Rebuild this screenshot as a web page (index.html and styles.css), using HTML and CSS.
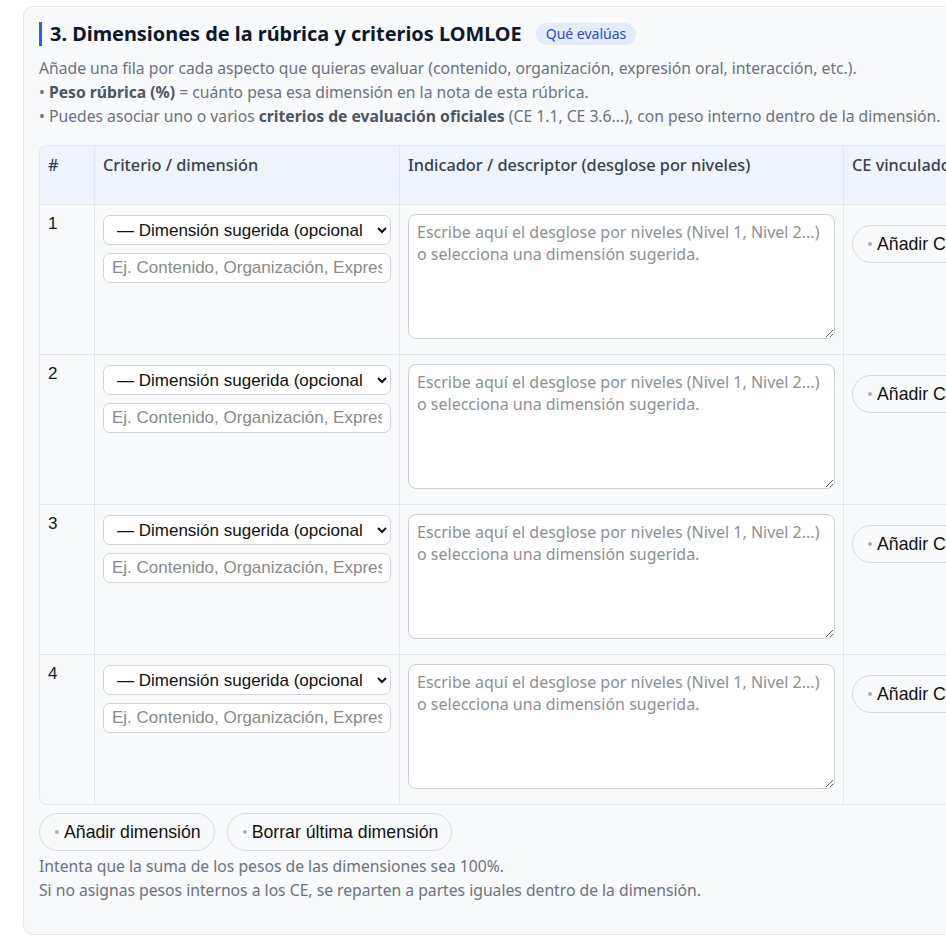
FILE: index.html
```html
<!DOCTYPE html>
<html lang="es">
<head>
<meta charset="utf-8">
<title>Dimensiones de la rúbrica</title>
<link rel="stylesheet" href="styles.css">
</head>
<body>
<section class="card">
  <div class="head">
    <h2 class="title">3. Dimensiones de la rúbrica y criterios LOMLOE</h2>
    <span class="pill">Qué evalúas</span>
  </div>
  <div class="desc">
    <p>Añade una fila por cada aspecto que quieras evaluar (contenido, organización, expresión oral, interacción, etc.).</p>
    <p>• <b>Peso rúbrica (%)</b> = cuánto pesa esa dimensión en la nota de esta rúbrica.</p>
    <p>• Puedes asociar uno o varios <b>criterios de evaluación oficiales</b> (CE 1.1, CE 3.6...), con peso interno dentro de la dimensión.</p>
  </div>
  <div class="table-wrap">
    <table class="grid">
      <thead>
        <tr>
          <th class="c-num">#</th>
          <th class="c-crit">Criterio / dimensión</th>
          <th class="c-ind">Indicador / descriptor (desglose por niveles)</th>
          <th class="c-ce">CE vinculados</th>
          <th class="c-peso">Peso rúbrica (%)</th>
        </tr>
      </thead>
      <tbody>
        <tr>
          <td class="c-num">1</td>
          <td class="c-crit">
            <select class="sel"><option>— Dimensión sugerida (opcional) —</option></select>
            <input class="inp" type="text" placeholder="Ej. Contenido, Organización, Expresión oral...">
          </td>
          <td class="c-ind"><textarea class="ta" placeholder="Escribe aquí el desglose por niveles (Nivel 1, Nivel 2...) o selecciona una dimensión sugerida."></textarea></td>
          <td class="c-ce"><button class="btn ce-btn" type="button">Añadir CE</button></td>
          <td class="c-peso"></td>
        </tr>
        <tr>
          <td class="c-num">2</td>
          <td class="c-crit">
            <select class="sel"><option>— Dimensión sugerida (opcional) —</option></select>
            <input class="inp" type="text" placeholder="Ej. Contenido, Organización, Expresión oral...">
          </td>
          <td class="c-ind"><textarea class="ta" placeholder="Escribe aquí el desglose por niveles (Nivel 1, Nivel 2...) o selecciona una dimensión sugerida."></textarea></td>
          <td class="c-ce"><button class="btn ce-btn" type="button">Añadir CE</button></td>
          <td class="c-peso"></td>
        </tr>
        <tr>
          <td class="c-num">3</td>
          <td class="c-crit">
            <select class="sel"><option>— Dimensión sugerida (opcional) —</option></select>
            <input class="inp" type="text" placeholder="Ej. Contenido, Organización, Expresión oral...">
          </td>
          <td class="c-ind"><textarea class="ta" placeholder="Escribe aquí el desglose por niveles (Nivel 1, Nivel 2...) o selecciona una dimensión sugerida."></textarea></td>
          <td class="c-ce"><button class="btn ce-btn" type="button">Añadir CE</button></td>
          <td class="c-peso"></td>
        </tr>
        <tr>
          <td class="c-num">4</td>
          <td class="c-crit">
            <select class="sel"><option>— Dimensión sugerida (opcional) —</option></select>
            <input class="inp" type="text" placeholder="Ej. Contenido, Organización, Expresión oral...">
          </td>
          <td class="c-ind"><textarea class="ta" placeholder="Escribe aquí el desglose por niveles (Nivel 1, Nivel 2...) o selecciona una dimensión sugerida."></textarea></td>
          <td class="c-ce"><button class="btn ce-btn" type="button">Añadir CE</button></td>
          <td class="c-peso"></td>
        </tr>
      </tbody>
    </table>
  </div>
  <div class="actions">
    <button class="btn" type="button">Añadir dimensión</button>
    <button class="btn" type="button">Borrar última dimensión</button>
  </div>
  <div class="help">
    <p>Intenta que la suma de los pesos de las dimensiones sea 100%.</p>
    <p>Si no asignas pesos internos a los CE, se reparten a partes iguales dentro de la dimensión.</p>
  </div>
</section>
</body>
</html>
```
FILE: styles.css
```css
html, body {
  margin: 0;
  padding: 0;
  background: #ffffff;
  overflow: hidden;
}
body {
  padding: 6px 0 0 23px;
  font-family: "Noto Sans", "Open Sans", sans-serif;
  color: #1f2937;
}
.card {
  width: 1220px;
  box-sizing: border-box;
  background: #f8f9fb;
  border: 1px solid #e3e6ea;
  border-radius: 10px;
  padding: 12px 15px 32px 15px;
}
.head {
  display: flex;
  align-items: center;
  gap: 14px;
  height: 30px;
}
.title {
  margin: 0;
  font-size: 19.9px;
  font-weight: 700;
  color: #0f172a;
  border-left: 3px solid #2563eb;
  padding-left: 8px;
  line-height: 24px;
}
.pill {
  background: #e3ecfb;
  color: #1d4ed8;
  font-size: 14px;
  border-radius: 999px;
  padding: 1px 10px;
  line-height: 20px;
}
.desc {
  margin-top: 7px;
  font-size: 15.7px;
  line-height: 24px;
  color: #6b7280;
}
.desc p, .help p { margin: 0; }
.desc b { color: #4b5563; font-weight: 700; }
.table-wrap {
  margin-top: 17px;
  border: 1px solid #e3e6ea;
  border-right: none;
  border-radius: 8px 0 0 8px;
  overflow: hidden;
}
.grid {
  border-collapse: collapse;
  table-layout: fixed;
  width: 1182px;
}
.grid th, .grid td {
  border-left: 1px solid #e3e6ea;
  border-bottom: 1px solid #e3e6ea;
  text-align: left;
  vertical-align: top;
}
.grid th:first-child, .grid td:first-child { border-left: none; }
.grid tbody tr:last-child td { border-bottom: none; }
.grid th {
  background: #eef3fc;
  font-size: 16.3px;
  font-weight: 500;
  color: #374151;
  padding: 8px 8px 0;
  height: 50px;
  line-height: 22px;
  white-space: nowrap;
  overflow: hidden;
}
.grid td {
  padding: 9px 8px 15px;
  font-family: "Liberation Sans", Arial, sans-serif;
  font-size: 17px;
  color: #111827;
}
.c-num { width: 38px; }
.c-crit { width: 288px; }
.c-ind { width: 427px; }
.c-ce { width: 184px; }
.c-peso { width: 164px; }
.sel {
  display: block;
  width: 100%;
  height: 30px;
  box-sizing: border-box;
  font-family: "Liberation Sans", Arial, sans-serif;
  font-size: 17px;
  color: #111;
  background: #ffffff;
  border: 1px solid #d1d5db;
  border-radius: 7px;
  padding: 0 12px 0 9px;
  margin: 1px 0 0;
}
.inp {
  display: block;
  width: 100%;
  height: 30px;
  box-sizing: border-box;
  margin-top: 8px;
  font-family: "Liberation Sans", Arial, sans-serif;
  font-size: 17px;
  background: #ffffff;
  border: 1px solid #d1d5db;
  border-radius: 7px;
  padding: 0 8px;
}
.inp::placeholder { color: #8a8a8a; }
.ta {
  display: block;
  width: 100%;
  height: 125px;
  box-sizing: border-box;
  font-family: "Noto Sans", "Open Sans", sans-serif;
  font-size: 16px;
  line-height: 22px;
  background: #ffffff;
  border: 1px solid #cbd0d6;
  border-radius: 8px;
  padding: 6px 8px;
  resize: vertical;
}
.ta::placeholder { color: #8c9096; }
.btn {
  display: inline-flex;
  align-items: center;
  height: 38px;
  box-sizing: border-box;
  padding: 0 13px 0 15px;
  border: 1px solid #d6d9de;
  border-radius: 999px;
  background: #f8f9fb;
  font-family: "Liberation Sans", Arial, sans-serif;
  font-size: 17.7px;
  color: #111;
  white-space: nowrap;
}
.btn::before {
  content: "";
  width: 4px;
  height: 4px;
  border-radius: 50%;
  background: #aab0b8;
  margin-right: 5px;
}
.ce-btn { margin-top: 11px; }
.actions {
  display: flex;
  gap: 12px;
  margin-top: 8px;
}
.help {
  margin-top: 3px;
  font-size: 15.7px;
  line-height: 24px;
  color: #6b7280;
}
```
